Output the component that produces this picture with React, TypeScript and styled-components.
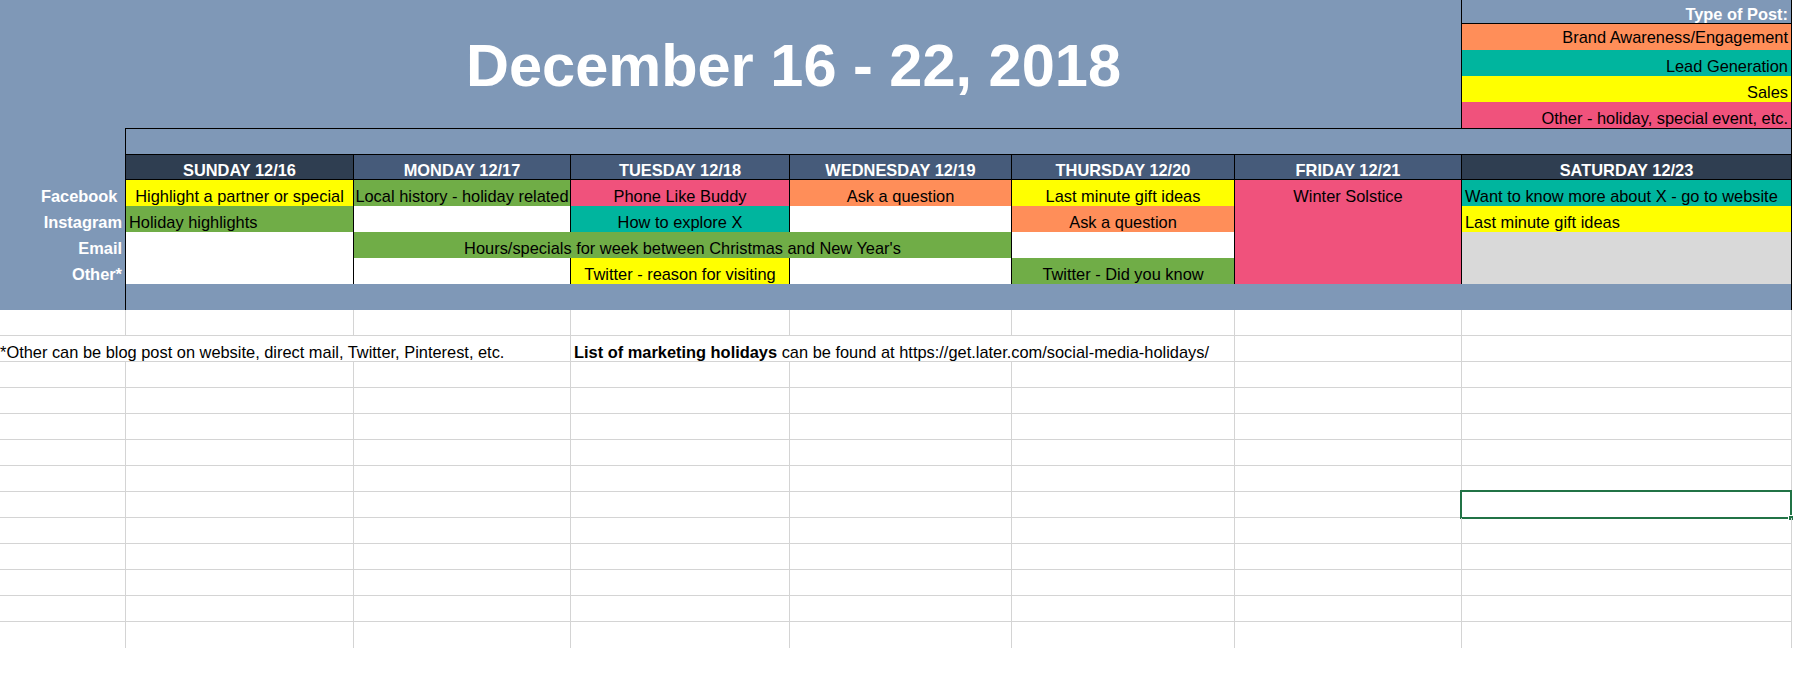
import React from "react";
import styled, { createGlobalStyle, css } from "styled-components";

const COLS = "126px 228px 217px 219px 222px 223px 227px 330px";
const BLUE = "#7f98b7";
const FONT = `"Liberation Sans", Arial, sans-serif`;

const GlobalStyle = createGlobalStyle`
  html, body {
    margin: 0;
    padding: 0;
    background: #ffffff;
    width: 1793px;
    height: 687px;
    overflow: hidden;
  }
  * { box-sizing: border-box; }
`;

const Sheet = styled.div`
  width: 1792px;
  font-family: ${FONT};
  font-size: 16.4px;
  color: #000;
`;

/* ---------- top band (title + legend) ---------- */
const TopBand = styled.div`
  display: grid;
  grid-template-columns: ${COLS};
  grid-template-rows: 24px 26px 26px 26px 26px;
  background: ${BLUE};
`;

const Title = styled.h1`
  grid-column: 2 / 8;
  grid-row: 1 / 6;
  margin: 0;
  padding-top: 4px;
  display: flex;
  align-items: center;
  justify-content: center;
  font: bold 59.5px/60px ${FONT};
  color: #ffffff;
  border-right: 1px solid #000;
`;

const Legend = styled.div`
  grid-column: 8;
  grid-row: 1 / 6;
  display: flex;
  flex-direction: column;
  border-right: 1px solid #000;
`;

const LegendItem = styled.div<{ $bg?: string; $h: number; $head?: boolean; $pb?: number }>`
  height: ${(p) => p.$h}px;
  display: flex;
  align-items: flex-end;
  justify-content: flex-end;
  padding: 0 3px ${(p) => p.$pb ?? 1}px 0;
  line-height: 18px;
  white-space: nowrap;
  background: ${(p) => p.$bg ?? "transparent"};
  ${(p) =>
    p.$head &&
    css`
      color: #fff;
      font-weight: bold;
      border-bottom: 1px solid #000;
    `}
`;

/* ---------- calendar block ---------- */
const CalRow = styled.div`
  display: grid;
  grid-template-columns: ${COLS};
  height: 26px;
  background: ${BLUE};
`;

const TextCell = styled.div`
  display: flex;
  align-items: flex-end;
  line-height: 18px;
  white-space: pre;
  overflow: hidden;
`;

const RowLabel = styled(TextCell)`
  justify-content: flex-end;
  padding-right: 3px;
  padding-bottom: 1px;
  color: #ffffff;
  font-weight: bold;
  border-right: 1px solid #000;
`;

const Spacer = styled.div<{ $top?: boolean }>`
  grid-column: 2 / 9;
  border-right: 1px solid #000;
  ${(p) => p.$top && css`border-top: 1px solid #000;`}
`;

const DayHeader = styled(TextCell)<{ $dark?: boolean }>`
  justify-content: center;
  color: #ffffff;
  font-weight: bold;
  background: ${(p) => (p.$dark ? "#2f3e51" : "#465b7a")};
  border-top: 1px solid #000;
  border-bottom: 1px solid #000;
  border-right: 1px solid #000;
`;

type Align = "left" | "center";

const PostCell = styled(TextCell)<{ $bg?: string; $align?: Align; $span?: number }>`
  justify-content: ${(p) => (p.$align === "left" ? "flex-start" : "center")};
  padding-left: ${(p) => (p.$align === "left" ? "3px" : "0")};
  padding-bottom: 1px;
  background: ${(p) => p.$bg ?? "#ffffff"};
  border-right: 1px solid #000;
  ${(p) => p.$span && css`grid-column: span ${p.$span};`}
`;

/* ---------- plain sheet grid ---------- */
const GridRow = styled.div<{ $last?: boolean }>`
  display: grid;
  grid-template-columns: ${COLS};
  height: 26px;
  background: #ffffff;
  border-bottom: ${(p) => (p.$last ? "none" : "1px solid #d4d4d4")};
`;

const GridCell = styled(TextCell)<{ $span?: number }>`
  position: relative;
  overflow: visible;
  border-right: 1px solid #d4d4d4;
  ${(p) => p.$span && css`grid-column: span ${p.$span};`}
`;

const NoteCell = styled(GridCell)<{ $pl: number }>`
  padding-left: ${(p) => p.$pl}px;
  overflow: hidden;
`;

const Selection = styled.div`
  position: absolute;
  top: -2px;
  left: -2px;
  right: -1px;
  bottom: -2px;
  border: 2px solid #217346;
  pointer-events: none;
`;

const FillHandle = styled.div`
  position: absolute;
  right: -4px;
  bottom: -4px;
  width: 6px;
  height: 6px;
  background: #217346;
  border: 1px solid #ffffff;
`;

const C = {
  yellow: "#ffff00",
  green: "#70ad47",
  pink: "#f0527c",
  orange: "#ff8e59",
  teal: "#00b59e",
  gray: "#d9d9d9",
};

const days: { label: string; dark?: boolean }[] = [
  { label: "SUNDAY 12/16", dark: true },
  { label: "MONDAY 12/17" },
  { label: "TUESDAY 12/18" },
  { label: "WEDNESDAY 12/19" },
  { label: "THURSDAY 12/20" },
  { label: "FRIDAY 12/21" },
  { label: "SATURDAY 12/23", dark: true },
];

type Post = { text?: string; bg?: string; align?: Align; span?: number };

const rows: { label: string; posts: Post[] }[] = [
  {
    label: "Facebook ",
    posts: [
      { text: "Highlight a partner or special", bg: C.yellow },
      { text: "Local history - holiday related", bg: C.green },
      { text: "Phone Like Buddy", bg: C.pink },
      { text: "Ask a question", bg: C.orange },
      { text: "Last minute gift ideas", bg: C.yellow },
      { text: "Winter Solstice", bg: C.pink },
      { text: "Want to know more about X - go to website", bg: C.teal, align: "left" },
    ],
  },
  {
    label: "Instagram",
    posts: [
      { text: "Holiday highlights", bg: C.green, align: "left" },
      {},
      { text: "How to explore X", bg: C.teal },
      {},
      { text: "Ask a question", bg: C.orange },
      { bg: C.pink },
      { text: "Last minute gift ideas", bg: C.yellow, align: "left" },
    ],
  },
  {
    label: "Email",
    posts: [
      {},
      { text: "Hours/specials for week between Christmas and New Year's", bg: C.green, span: 3 },
      {},
      { bg: C.pink },
      { bg: C.gray },
    ],
  },
  {
    label: "Other*",
    posts: [
      {},
      {},
      { text: "Twitter - reason for visiting", bg: C.yellow },
      {},
      { text: "Twitter - Did you know", bg: C.green },
      { bg: C.pink },
      { bg: C.gray },
    ],
  },
];

const GRID_ROWS = 13;
const NOTE_ROW = 1;
const SELECTED_ROW = 7;

export default function App() {
  return (
    <>
      <GlobalStyle />
      <Sheet>
        <TopBand>
          <Title>December 16 - 22, 2018</Title>
          <Legend>
            <LegendItem $h={24} $head $pb={0}>Type of Post:</LegendItem>
            <LegendItem $h={26} $bg={C.orange} $pb={4}>Brand Awareness/Engagement</LegendItem>
            <LegendItem $h={26} $bg={C.teal}>Lead Generation</LegendItem>
            <LegendItem $h={26} $bg={C.yellow}>Sales</LegendItem>
            <LegendItem $h={26} $bg={C.pink}>Other - holiday, special event, etc.</LegendItem>
          </Legend>
        </TopBand>

        <CalRow>
          <RowLabel />
          <Spacer $top />
        </CalRow>

        <CalRow>
          <RowLabel />
          {days.map((d) => (
            <DayHeader key={d.label} $dark={d.dark}>
              {d.label}
            </DayHeader>
          ))}
        </CalRow>

        {rows.map((r) => (
          <CalRow key={r.label}>
            <RowLabel>{r.label}</RowLabel>
            {r.posts.map((p, i) => (
              <PostCell key={i} $bg={p.bg} $align={p.align} $span={p.span}>
                {p.text}
              </PostCell>
            ))}
          </CalRow>
        ))}

        <CalRow>
          <RowLabel />
          <Spacer />
        </CalRow>

        {Array.from({ length: GRID_ROWS }).map((_, ri) => (
          <GridRow key={ri} $last={ri === GRID_ROWS - 1}>
            {ri === NOTE_ROW ? (
              <>
                <NoteCell $span={3} $pl={0}>
                  *Other can be blog post on website, direct mail, Twitter, Pinterest, etc.
                </NoteCell>
                <NoteCell $span={3} $pl={3}>
                  <span>
                    <b>List of marketing holidays</b> can be found at https://get.later.com/social-media-holidays/
                  </span>
                </NoteCell>
                <GridCell />
                <GridCell />
              </>
            ) : (
              Array.from({ length: 8 }).map((__, ci) => (
                <GridCell key={ci}>
                  {ri === SELECTED_ROW && ci === 7 && (
                    <Selection>
                      <FillHandle />
                    </Selection>
                  )}
                </GridCell>
              ))
            )}
          </GridRow>
        ))}
      </Sheet>
    </>
  );
}
